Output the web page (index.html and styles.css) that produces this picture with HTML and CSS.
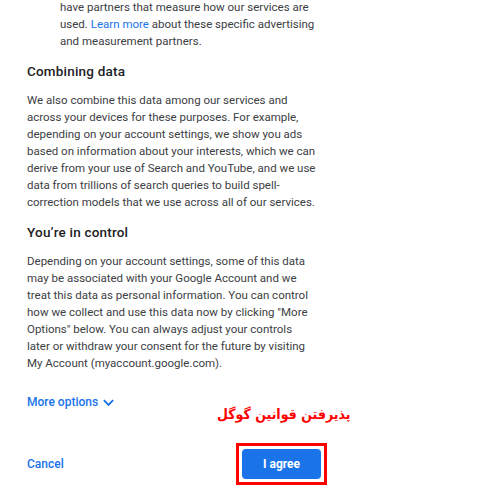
FILE: index.html
```html
<!DOCTYPE html>
<html>
<head>
<meta charset="utf-8">
<link rel="stylesheet" href="styles.css">
</head>
<body>
<div class="page">
  <p class="text indent">have partners that measure how our services are used. <a class="link">Learn more</a> about these specific advertising and measurement partners.</p>
  <h2 class="heading">Combining data</h2>
  <p class="text">We also combine this data among our services and across your devices for these purposes. For example, depending on your account settings, we show you ads based on information about your interests, which we can derive from your use of Search and YouTube, and we use data from trillions of search queries to build spell-correction models that we use across all of our services.</p>
  <h2 class="heading">You’re in control</h2>
  <p class="text">Depending on your account settings, some of this data may be associated with your Google Account and we treat this data as personal information. You can control how we collect and use this data now by clicking "More Options" below. You can always adjust your controls later or withdraw your consent for the future by visiting My Account (myaccount.google.com).</p>
  <div class="more">More options
    <svg class="chev" width="13" height="13" viewBox="0 0 14 14"><path d="M2 4.5 L7 9.5 L12 4.5" fill="none" stroke="#1a73e8" stroke-width="2"/></svg>
  </div>
  <div class="footer">
    <span class="cancel">Cancel</span>
    <div class="highlight"><button class="agree">I agree</button></div>
    <div class="note" dir="rtl">پذیرفتن قوانین گوگل</div>
  </div>
</div>
</body>
</html>
```
FILE: styles.css
```css
html, body {
  margin: 0;
  padding: 0;
  background: #fff;
}
.page {
  width: 289.5px;
  padding-left: 27px;
  margin-top: -1px;
  font-family: Roboto, "Liberation Sans", sans-serif;
  color: #3c4043;
}
.text {
  margin: 0;
  font-size: 11.5px;
  line-height: 17px;
}
.indent {
  padding-left: 33px;
}
.link {
  color: #1a73e8;
}
.heading {
  margin: 11px 0 11px;
  font-size: 13.5px;
  line-height: 20px;
  font-weight: 500;
  color: #202124;
  letter-spacing: 0.2px;
}
.more {
  margin-top: 20px;
  display: flex;
  align-items: center;
  gap: 4px;
  height: 20px;
  font-size: 12px;
  font-weight: 500;
  color: #1a73e8;
}
.footer {
  position: relative;
  margin-top: 31px;
  width: 300px;
  display: flex;
  justify-content: space-between;
  align-items: center;
}
.cancel {
  font-size: 12px;
  font-weight: 500;
  color: #1a73e8;
}
.highlight {
  border: 3px solid #ff0000;
  padding: 3px;
}
.agree {
  display: block;
  width: 79px;
  height: 30px;
  border: none;
  border-radius: 4px;
  background: #1a73e8;
  color: #fff;
  font-family: Roboto, "Liberation Sans", sans-serif;
  font-size: 12px;
  font-weight: 700;
}
.note {
  position: absolute;
  left: 190px;
  top: -37px;
  font-family: "DejaVu Sans Condensed", "DejaVu Sans", sans-serif;
  font-weight: 700;
  font-size: 14px;
  line-height: 16px;
  color: #ff0000;
  white-space: nowrap;
}
```
